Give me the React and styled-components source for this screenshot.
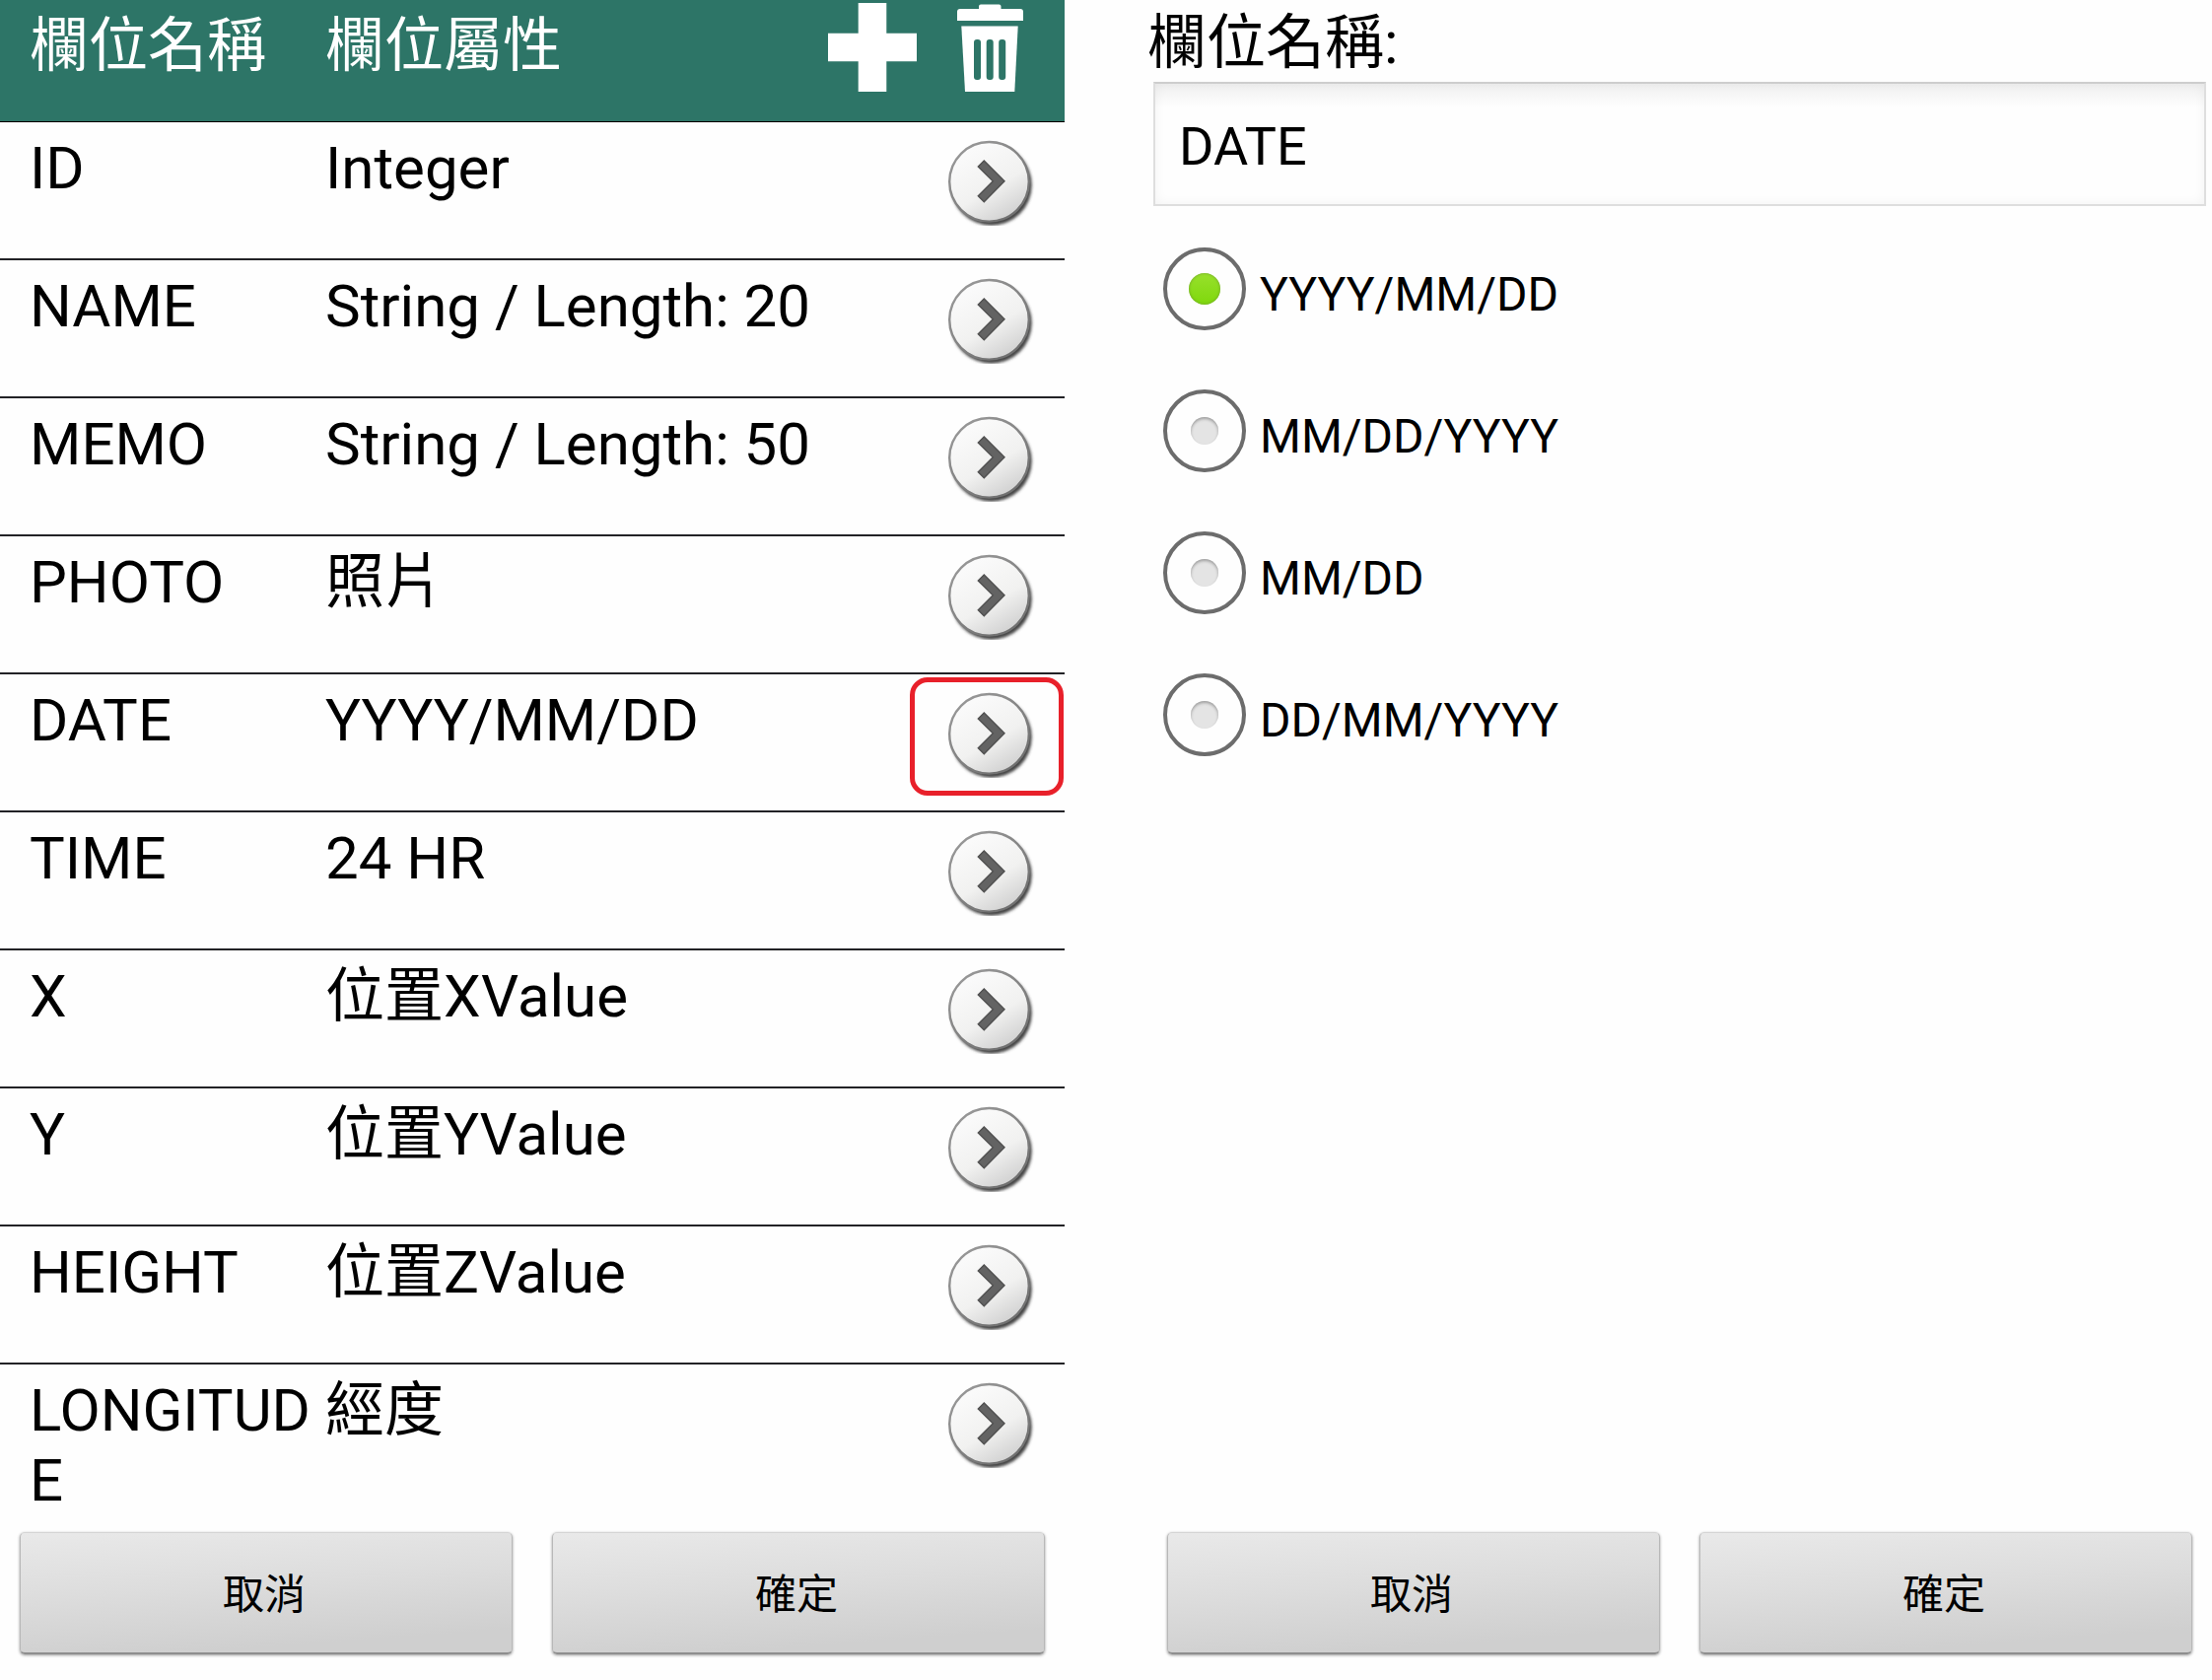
import { useState } from 'react'
import styled, { createGlobalStyle } from 'styled-components'

const colors = {
  header: '#2d7567',
  line: '#222226',
  highlight: '#e8202a',
  text: '#000',
  page: '#fefefe',
}

const fields = [
  { name: 'ID', type: 'Integer' },
  { name: 'NAME', type: 'String / Length: 20' },
  { name: 'MEMO', type: 'String / Length: 50' },
  { name: 'PHOTO', type: '照片' },
  { name: 'DATE', type: 'YYYY/MM/DD', highlighted: true },
  { name: 'TIME', type: '24 HR' },
  { name: 'X', type: '位置XValue' },
  { name: 'Y', type: '位置YValue' },
  { name: 'HEIGHT', type: '位置ZValue' },
  { name: 'LONGITUDE', type: '經度' },
]

const formats = ['YYYY/MM/DD', 'MM/DD/YYYY', 'MM/DD', 'DD/MM/YYYY']

const GlobalStyle = createGlobalStyle`
  * {
    box-sizing: border-box;
  }

  body {
    margin: 0;
    background: ${colors.page};
    color: ${colors.text};
    font-family: Roboto, 'Noto Sans CJK TC', sans-serif;
  }

  button,
  input {
    font-family: inherit;
    color: inherit;
  }
`

const Page = styled.main`
  display: grid;
  grid-template-columns: 1fr 1fr;
  gap: 84px;
  min-height: 100vh;
`

const Panel = styled.section`
  display: flex;
  flex-direction: column;
  min-width: 0;
`

const PanelBody = styled.div`
  flex: 1;
`

const Table = styled.table`
  width: 100%;
  table-layout: fixed;
  border-spacing: 0;
  font-size: 60px;
  line-height: 71px;
`

const NameCol = styled.col`
  width: 330px;
`

const ActionCol = styled.col`
  width: 250px;
`

const HeadCell = styled.th`
  height: 124px;
  padding: 11px 0 0 ${props => (props.$first ? '30px' : 0)};
  border-bottom: 1px solid #000;
  background: ${colors.header};
  color: #fff;
  font-weight: 400;
  text-align: left;
  vertical-align: top;
`

const HeadActions = styled.td`
  padding: 3px 30px 0 0;
  border-bottom: 1px solid #000;
  background: ${colors.header};
  vertical-align: top;
`

const ButtonGroup = styled.div`
  display: flex;
  justify-content: flex-end;
  gap: 30px;
`

const Row = styled.tr`
  &:last-child > td {
    border-bottom: 0;
  }
`

const Cell = styled.td`
  height: 140px;
  padding: 11px 0 0 ${props => (props.$first ? '30px' : 0)};
  border-bottom: 2px solid ${colors.line};
  vertical-align: top;
  word-break: break-all;
`

const ActionCell = styled.td`
  position: relative;
  padding: 15px 30px 0 0;
  border-bottom: 2px solid ${colors.line};
  vertical-align: top;
`

const Highlight = styled.span`
  position: absolute;
  top: 3px;
  right: 1px;
  width: 156px;
  height: 120px;
  border: 5px solid ${colors.highlight};
  border-radius: 18px;
  pointer-events: none;
`

const IconButton = styled.button`
  display: block;
  width: 90px;
  height: 90px;
  padding: 0;
  border: 0;
  background: none;
  cursor: pointer;

  svg {
    display: block;
    width: 100%;
    height: 100%;
  }
`

const Footer = styled.footer`
  display: grid;
  grid-template-columns: 1fr 1fr;
  gap: 40px;
  padding: 0 20px 26px;
`

const FooterButton = styled.button`
  height: 124px;
  padding: 0 4px 4px 0;
  border: 1px solid #b8b8b8;
  border-top-color: #d4d4d4;
  border-bottom: 2px solid #8e8e8e;
  border-radius: 5px;
  background: linear-gradient(176deg, #e9e9e9, #dcdcdc 45%, #cfcfcf 85%);
  box-shadow: 0 1px 3px rgba(0, 0, 0, 0.4);
  font-size: 42px;
  cursor: pointer;
`

const FieldLabel = styled.label`
  display: block;
  padding-top: 8px;
  font-size: 60px;
  line-height: 71px;
`

const FieldBox = styled.div`
  padding: 4px 6px 12px;
`

const TextInput = styled.input`
  display: block;
  width: 100%;
  height: 126px;
  padding: 4px 24px 0;
  border: 2px solid #dedede;
  border-top-color: #cdcdcd;
  border-radius: 0;
  outline: 0;
  background: linear-gradient(#f0f0f0, #fefefe 24px);
  box-shadow: inset 0 0 12px rgba(0, 0, 0, 0.05);
  font-size: 54px;
`

const Options = styled.fieldset`
  margin: 0;
  padding: 0 16px;
  border: 0;
`

const Option = styled.label`
  display: flex;
  align-items: center;
  gap: 14px;
  height: 144px;
  cursor: pointer;
`

const OptionText = styled.span`
  padding-top: 12px;
  font-size: 48px;
  line-height: 56px;
`

const Radio = styled.input`
  appearance: none;
  display: grid;
  place-items: center;
  width: 84px;
  height: 84px;
  margin: 0;
  border: 4px solid #6c6c6c;
  border-radius: 50%;

  &::before {
    content: '';
    width: 28px;
    height: 28px;
    border-radius: 50%;
    background: #e4e4e4;
    box-shadow: inset 0 2px 3px #a0a0a0;
  }

  &:checked::before {
    width: 32px;
    height: 32px;
    background: linear-gradient(#98e02c, #7fd80c);
    box-shadow: inset 0 0 3px #6a9a2c;
  }
`

const PlusIcon = () => (
  <svg viewBox="0 0 90 90" aria-hidden="true">
    <path fill="#fff" d="M30.7 0h28.6v30.7H90v28.6H59.3V90H30.7V59.3H0V30.7h30.7z" />
  </svg>
)

const TrashIcon = () => (
  <svg viewBox="0 0 90 90" aria-hidden="true">
    <path
      fill="#fff"
      d="M33 6V3.5Q33 1.5 35 1.5H53.5Q55.500 1.5 55.500 3.5V6H75Q78 6 78 9V18H11V9Q11 6 14 6z"
    />
    <path fill="#fff" d="M15.3 23.5H72.7L69.3 90H19z" />
    <g fill={colors.header}>
      <rect x="28" y="37" width="7" height="41" rx="3" />
      <rect x="40.7" y="37" width="7" height="41" rx="3" />
      <rect x="53.2" y="37" width="7" height="41" rx="3" />
    </g>
  </svg>
)

const ArrowIcon = () => (
  <svg viewBox="0 0 90 90" aria-hidden="true">
    <defs>
      <linearGradient id="face" x1="0.3" y1="0.1" x2="0.8" y2="0.95">
        <stop offset="0" stopColor="#fafafa" />
        <stop offset="0.55" stopColor="#f1f1f0" />
        <stop offset="1" stopColor="#cfcfcf" />
      </linearGradient>
      <linearGradient id="rim" x1="0.2" y1="0.1" x2="0.8" y2="0.9">
        <stop offset="0" stopColor="#969696" />
        <stop offset="1" stopColor="#707070" />
      </linearGradient>
      <filter id="soft" x="-20%" y="-20%" width="140%" height="140%">
        <feGaussianBlur stdDeviation="1.5" />
      </filter>
    </defs>
    <circle cx="45.7" cy="48.7" r="41" fill="#444" filter="url(#soft)" />
    <circle cx="43.5" cy="45.3" r="40.3" fill="url(#face)" stroke="url(#rim)" strokeWidth="2.4" />
    <path
      d="M38.3 24L59 44.800 38.3 65.700 32.3 59.700 47.3 44.800 32.3 30z"
      fill="#636363"
      stroke="#505050"
      strokeWidth="1.4"
    />
  </svg>
)

const Actions = () => (
  <Footer>
    <FooterButton type="button">取消</FooterButton>
    <FooterButton type="button">確定</FooterButton>
  </Footer>
)

const FieldRow = ({ name, type, highlighted }) => (
  <Row>
    <Cell $first>{name}</Cell>
    <Cell>{type}</Cell>
    <ActionCell>
      <ButtonGroup>
        <IconButton type="button" aria-label={name}>
          <ArrowIcon />
        </IconButton>
      </ButtonGroup>
      {highlighted && <Highlight />}
    </ActionCell>
  </Row>
)

const FieldList = () => (
  <Panel>
    <PanelBody>
      <Table>
        <colgroup>
          <NameCol />
          <col />
          <ActionCol />
        </colgroup>
        <thead>
          <tr>
            <HeadCell scope="col" $first>
              欄位名稱
            </HeadCell>
            <HeadCell scope="col">欄位屬性</HeadCell>
            <HeadActions>
              <ButtonGroup>
                <IconButton type="button" aria-label="新增">
                  <PlusIcon />
                </IconButton>
                <IconButton type="button" aria-label="刪除">
                  <TrashIcon />
                </IconButton>
              </ButtonGroup>
            </HeadActions>
          </tr>
        </thead>
        <tbody>
          {fields.map(field => (
            <FieldRow key={field.name} {...field} />
          ))}
        </tbody>
      </Table>
    </PanelBody>
    <Actions />
  </Panel>
)

const FieldEditor = () => {
  const [name, setName] = useState('DATE')
  const [format, setFormat] = useState(formats[0])

  return (
    <Panel>
      <PanelBody>
        <FieldLabel htmlFor="field-name">欄位名稱:</FieldLabel>
        <FieldBox>
          <TextInput
            id="field-name"
            type="text"
            value={name}
            onChange={e => setName(e.target.value)}
          />
        </FieldBox>
        <Options>
          {formats.map(item => (
            <Option key={item}>
              <Radio
                type="radio"
                name="format"
                value={item}
                checked={format === item}
                onChange={() => setFormat(item)}
              />
              <OptionText>{item}</OptionText>
            </Option>
          ))}
        </Options>
      </PanelBody>
      <Actions />
    </Panel>
  )
}

const App = () => (
  <>
    <GlobalStyle />
    <Page>
      <FieldList />
      <FieldEditor />
    </Page>
  </>
)

export default App
